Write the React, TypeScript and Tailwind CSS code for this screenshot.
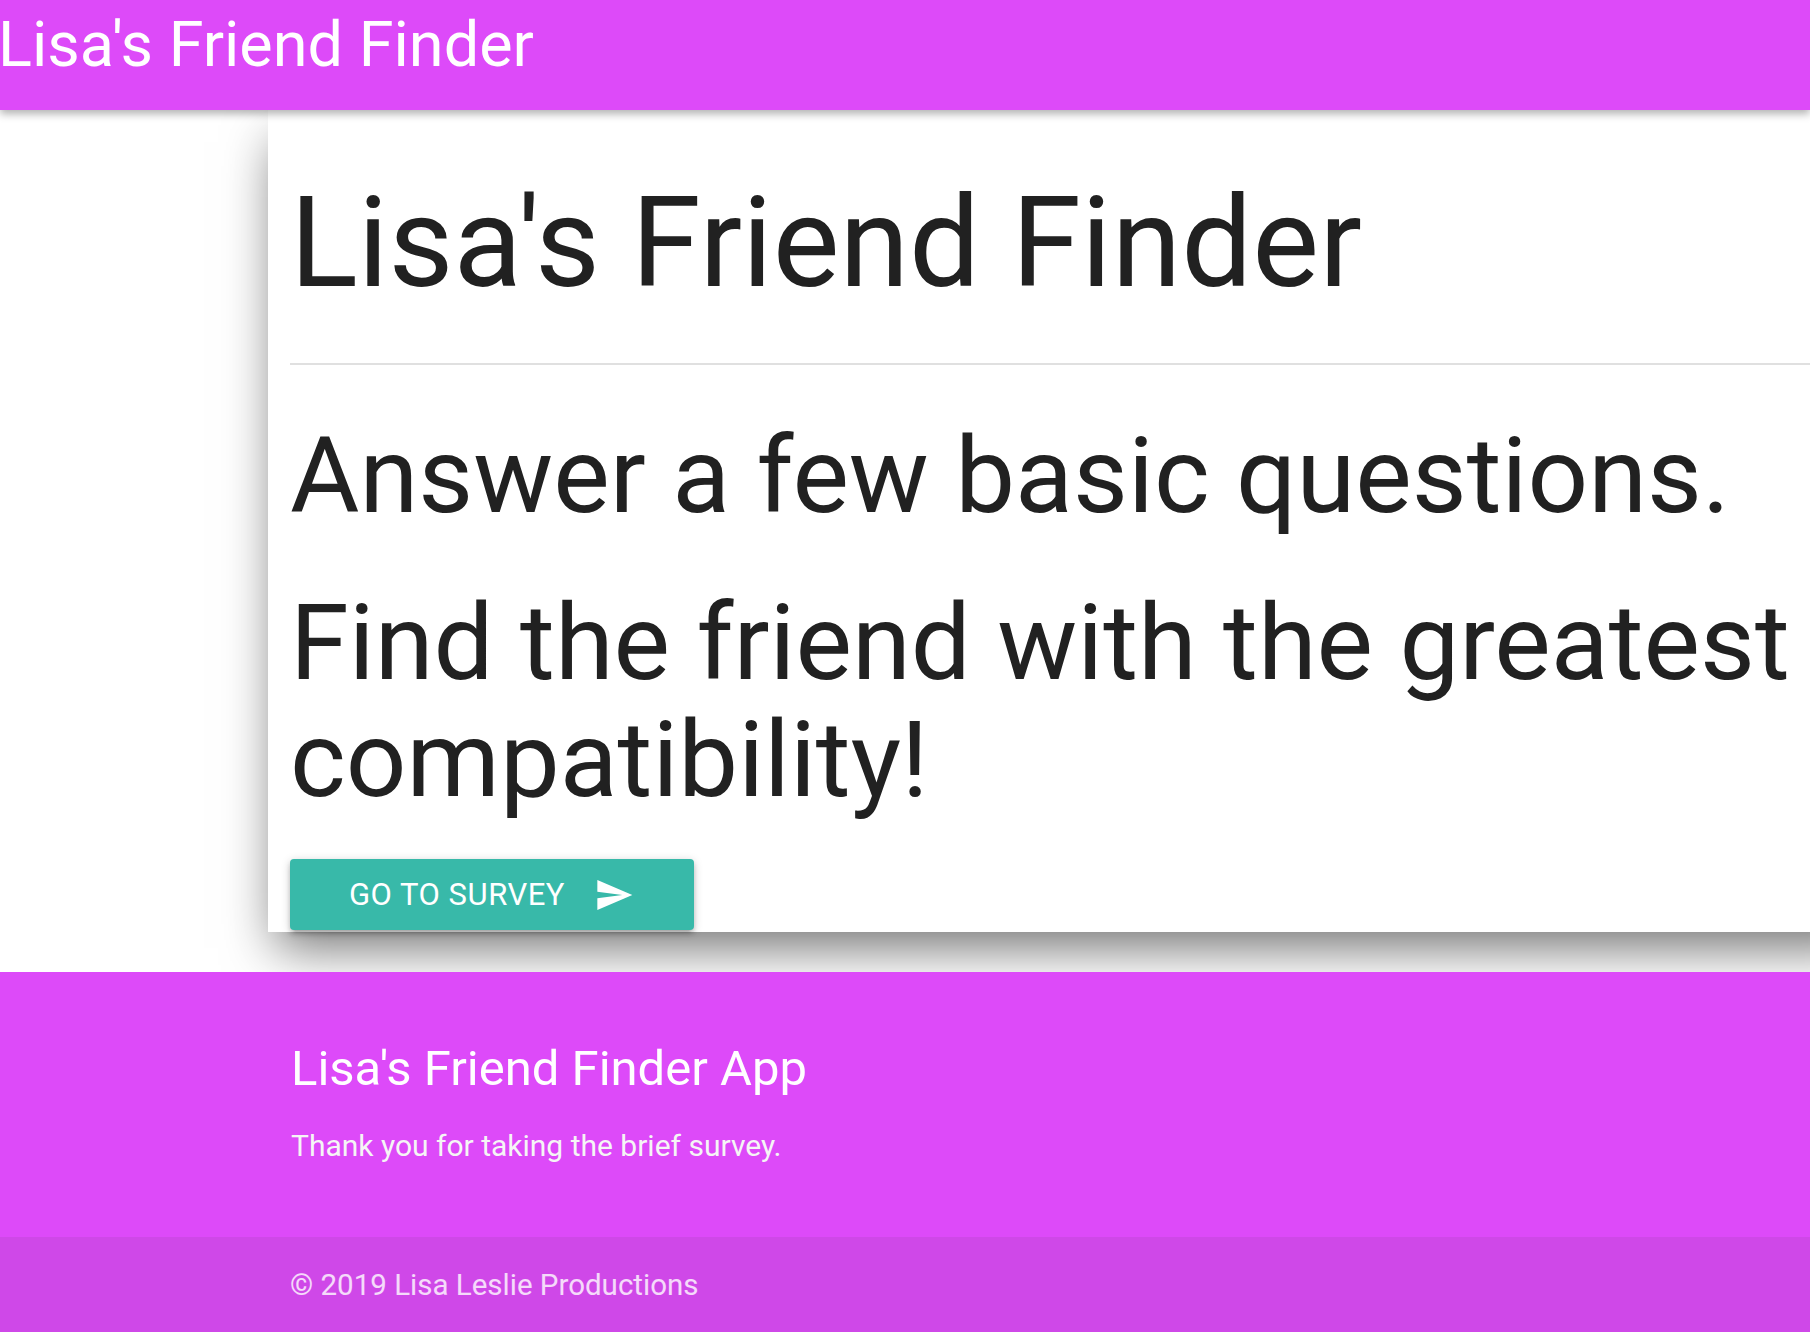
import React from "react";

function SendIcon() {
  return (
    <svg viewBox="0 0 24 24" className="w-[40px] h-[40px] shrink-0" fill="#ffffff">
      <path d="M2.01 21L23 12 2.01 3 2 10l15 2-15 2z" />
    </svg>
  );
}

export default function App() {
  return (
    <div className="w-[1810px] overflow-hidden bg-white font-['Roboto',sans-serif] text-[#212121]">
      <nav className="relative z-10 h-[110px] bg-[#dd4af9] shadow-[0_4px_8px_rgba(0,0,0,0.3)]">
        <div className="pt-[13px] -ml-[2px] text-[63px] leading-none text-white whitespace-nowrap">
          Lisa's Friend Finder
        </div>
      </nav>

      <main className="ml-[268px] w-[1600px] bg-white px-[22px] pt-[64px] pb-[2px] shadow-[0_24px_48px_-8px_rgba(0,0,0,0.55)]">
        <h1 className="text-[126px] leading-[1.1] font-normal">Lisa's Friend Finder</h1>
        <hr className="mt-[50px] border-0 h-[2px] bg-[#e0e0e0]" />
        <h2 className="mt-[52px] text-[106.5px] leading-[1.1] font-normal">Answer a few basic questions.</h2>
        <h2 className="mt-[50px] w-[1540px] text-[106.5px] leading-[1.1] font-normal">
          Find the friend with the greatest compatibility!
        </h2>
        <button
          type="button"
          className="mt-[41px] flex h-[71px] w-[404px] items-center rounded-[4px] bg-[#38b9a9] pl-[59px] text-[31px] uppercase tracking-[0.5px] text-white shadow-[0_4px_4px_rgba(0,0,0,0.14),0_6px_2px_-4px_rgba(0,0,0,0.12),0_2px_10px_rgba(0,0,0,0.2)]"
        >
          <span className="leading-none">Go to Survey</span>
          <span className="ml-[29px] flex items-center">
            <SendIcon />
          </span>
        </button>
      </main>

      <footer className="mt-[40px] bg-[#dd4af9] text-white">
        <div className="pl-[291px] pt-[70px] pb-[69px]">
          <h5 className="text-[49px] leading-[1.1] font-normal">Lisa's Friend Finder App</h5>
          <p className="mt-[27px] text-[30px] leading-[1.5] text-[#f5f5f5]">Thank you for taking the brief survey.</p>
        </div>
        <div className="flex h-[96px] items-center bg-[#cf48e8] pl-[290px] text-[29.5px] text-white/80">
          © 2019 Lisa Leslie Productions
        </div>
      </footer>
    </div>
  );
}
